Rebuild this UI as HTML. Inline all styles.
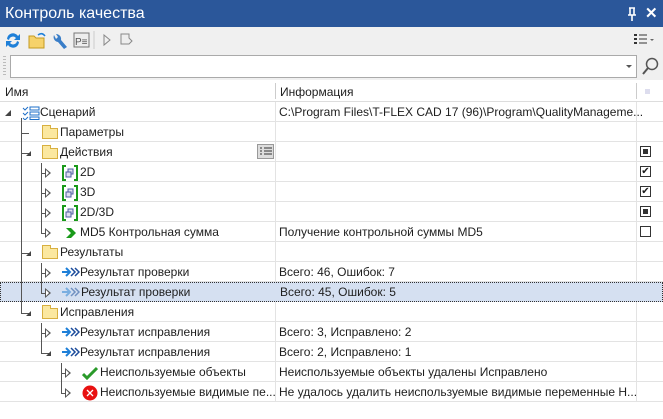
<!DOCTYPE html><html><head><meta charset="utf-8"><style>
*{margin:0;padding:0;box-sizing:border-box}
body{width:663px;height:419px;overflow:hidden;background:#fff;font-family:"Liberation Sans",sans-serif;font-size:12px;color:#1e1e1e;position:relative}
.a{position:absolute}
.title{left:0;top:0;width:663px;height:27px;background:#2b579a;color:#fff;font-size:16px;line-height:27px;padding-left:5px}
.tb{left:0;top:27px;width:663px;height:26px;background:#f0f0f0}
.sr{left:0;top:53px;width:663px;height:27px;background:#f0f0f0}
.hdr{left:0;top:80px;width:663px;height:22px;background:#fff;border-bottom:1px solid #ddd}
.row{position:absolute;left:0;width:663px;height:20px;border-bottom:1px solid #e3e3e3}
.t{position:absolute;top:1px;line-height:19px;white-space:nowrap}
.vl{position:absolute;width:1px;background:#555}
.hl{position:absolute;height:1px;background:#555}
.fold{position:absolute;width:16px;height:11px;background:#fbe8a0;border:1px solid #d8b040;top:6px}
.fold:before{content:"";position:absolute;left:-1px;top:-4px;width:7px;height:3px;background:#fbe8a0;border:1px solid #d8b040;border-bottom:none}
.tri2{position:absolute;width:0;height:0;border-top:5px solid transparent;border-bottom:5px solid transparent;border-left:6px solid #555}
.tri2:after{content:"";position:absolute;left:-5px;top:-3px;width:0;height:0;border-top:3px solid transparent;border-bottom:3px solid transparent;border-left:3.5px solid #fff}
.cb{position:absolute;left:640px;top:4px;width:11px;height:11px;border:1px solid #333;background:#fff}
</style></head><body>
<div class="a title">Контроль качества<svg class="a" style="left:626px;top:7px" width="12" height="14"><path d="M3 1h6M4 1v7M8 1v7M2 8h8M6 8v6" stroke="#fff" stroke-width="1.6" fill="none"/></svg><span style="position:absolute;left:645px;top:0;font-size:15px;font-weight:bold">✕</span></div>
<div class="a tb">
<svg class="a" style="left:4px;top:4px" width="130" height="18">
<path d="M3 8 A6 6 0 0 1 14 5 L16 3 L16 9 L10 9 L12 7 A4 4 0 0 0 5 9Z" fill="#1e7fd8"/><path d="M15 11 A6 6 0 0 1 4 14 L2 16 L2 10 L8 10 L6 12 A4 4 0 0 0 13 10Z" fill="#1e7fd8"/>
<path d="M25 5 h5 l2 2 h8 v10 h-15z" fill="#f6d26a" stroke="#c49a20"/><path d="M34 4 q4 -3 7 1" stroke="#1e7fd8" fill="none" stroke-width="1.5"/>
<path d="M50 4 a5 5 0 0 0 4 7 l6 7 l3 -2 l-6 -7 a5 5 0 0 0 -5 -6 l2 3 l-2 2z" fill="#3a7ec8"/>
<rect x="70" y="2" width="15" height="14" fill="#eee" stroke="#777"/><text x="71" y="14" font-size="10" fill="#555" font-family="Liberation Sans">P≡</text>
<path d="M90 0 v18" stroke="#ccc"/>
<path d="M100 4 l6 5 l-6 5z" fill="none" stroke="#888"/>
<path d="M117 3 h8 v4 l3 3 l-3 3 h-8z" fill="#eee" stroke="#888"/>
</svg>
<svg class="a" style="left:634px;top:6px" width="24" height="14"><rect x="0" y="1" width="3" height="2" fill="#333"/><rect x="0" y="5" width="3" height="2" fill="#333"/><rect x="0" y="9" width="3" height="2" fill="#333"/><path d="M5 2h8M5 6h8M5 10h8" stroke="#333"/><path d="M16 6l2 2 2-2z" fill="#666"/></svg>
</div>
<div class="a sr"><div class="a" style="left:3px;top:3px;width:3px;height:20px;background:repeating-linear-gradient(#bbb 0 1px,transparent 1px 3px)"></div>
<div class="a" style="left:10px;top:2px;width:627px;height:23px;background:#fff;border:1px solid #aaa"></div>
<div class="a" style="left:626px;top:12px;border-left:3px solid transparent;border-right:3px solid transparent;border-top:3px solid #555"></div>
<svg class="a" style="left:640px;top:3px" width="20" height="20"><circle cx="12" cy="8" r="5.5" fill="none" stroke="#555" stroke-width="1.5"/><path d="M8 12 L3 18" stroke="#555" stroke-width="2"/></svg></div>
<div class="a hdr"><span class="a" style="left:5px;top:5px">Имя</span><div class="a" style="left:275px;top:3px;width:1px;height:16px;background:#ccc"></div><span class="a" style="left:280px;top:5px">Информация</span><div class="a" style="left:636px;top:3px;width:1px;height:16px;background:#ccc"></div><div class="a" style="left:645px;top:9px;width:5px;height:5px;background:#dde"></div></div>
<div class="a" style="left:275px;top:102px;width:1px;height:300px;background:#e3e3e3"></div>
<div class="a" style="left:636px;top:102px;width:1px;height:300px;background:#e3e3e3"></div>

<div class="row" style="top:102px"><div class="a" style="left:5px;top:8px;border-left:6px solid transparent;border-bottom:6px solid #444"></div>
<svg class="a" style="left:22px;top:4px" width="18" height="14"><path d="M1 2l2 2 3-3M1 7l2 2 3-3M1 12l2 2 3-3" stroke="#1e6fc8" fill="none"/><rect x="8" y="1" width="9" height="3" fill="none" stroke="#1e6fc8"/><rect x="8" y="6" width="9" height="3" fill="none" stroke="#1e6fc8"/><rect x="8" y="11" width="9" height="2.5" fill="none" stroke="#1e6fc8"/></svg>
<span class="t" style="left:40px">Сценарий</span><span class="t" style="left:279px">C:\Program Files\T-FLEX CAD 17 (96)\Program\QualityManageme...</span></div>
<div class="row" style="top:122px"><div class="fold" style="left:42px"></div><span class="t" style="left:60px">Параметры</span></div>
<div class="row" style="top:142px"><div class="fold" style="left:42px"></div><span class="t" style="left:60px">Действия</span>
<div class="a" style="left:257px;top:2px;width:17px;height:15px;background:#ddd;border:1px solid #999"></div><svg class="a" style="left:259px;top:4px" width="14" height="11"><path d="M1 2h2M1 5h2M1 8h2M5 2h8M5 5h8M5 8h8" stroke="#333"/></svg><div class="cb"><div class="a" style="left:2px;top:2px;width:5px;height:5px;background:#333"></div></div></div>
<div class="row" style="top:162px"><span class="t" style="left:80px">2D</span><div class="cb" style="font-size:10px;line-height:9px;text-align:center">✔</div></div>
<div class="row" style="top:182px"><span class="t" style="left:80px">3D</span><div class="cb" style="font-size:10px;line-height:9px;text-align:center">✔</div></div>
<div class="row" style="top:202px"><span class="t" style="left:80px">2D/3D</span><div class="cb"><div class="a" style="left:2px;top:2px;width:5px;height:5px;background:#333"></div></div></div>
<div class="row" style="top:222px"><svg class="a" style="left:65px;top:5px" width="12" height="12"><path d="M1 1h5l5 5-5 5h-5l5-5z" fill="#1a9a1a"/></svg><span class="t" style="left:80px">MD5 Контрольная сумма</span><span class="t" style="left:279px">Получение контрольной суммы MD5</span><div class="cb"></div></div>
<div class="row" style="top:242px"><div class="fold" style="left:42px"></div><span class="t" style="left:60px">Результаты</span></div>
<div class="row" style="top:262px"><span class="t" style="left:80px">Результат проверки</span><span class="t" style="left:279px">Всего: 46, Ошибок: 7</span></div>
<div class="row" style="top:282px;background:#d5e0f1;border:1px dotted #333"><span class="t" style="left:80px;top:0">Результат проверки</span><span class="t" style="left:279px;top:0">Всего: 45, Ошибок: 5</span></div>
<div class="row" style="top:302px"><div class="fold" style="left:42px"></div><span class="t" style="left:60px">Исправления</span></div>
<div class="row" style="top:322px"><span class="t" style="left:80px">Результат исправления</span><span class="t" style="left:279px">Всего: 3, Исправлено: 2</span></div>
<div class="row" style="top:342px"><span class="t" style="left:80px">Результат исправления</span><span class="t" style="left:279px">Всего: 2, Исправлено: 1</span></div>
<div class="row" style="top:362px"><svg class="a" style="left:82px;top:4px" width="16" height="14"><path d="M1 8l4 4 10-10" stroke="#2a9a2a" stroke-width="3" fill="none"/></svg><span class="t" style="left:100px">Неиспользуемые объекты</span><span class="t" style="left:279px">Неиспользуемые объекты удалены Исправлено</span></div>
<div class="row" style="top:382px"><svg class="a" style="left:82px;top:3px" width="16" height="16"><circle cx="8" cy="8" r="7.5" fill="#e81010"/><path d="M5 5l6 6M11 5l-6 6" stroke="#fff" stroke-width="1.3"/></svg><span class="t" style="left:100px">Неиспользуемые видимые пе...</span><span class="t" style="left:279px">Не удалось удалить неиспользуемые видимые переменные Н...</span></div>

<div class="vl" style="left:21px;top:118px;height:195px"></div>
<div class="hl" style="left:21px;top:133px;width:8px"></div>
<div class="hl" style="left:21px;top:153px;width:8px"></div><div class="a" style="left:26px;top:151px;border-left:5px solid transparent;border-bottom:5px solid #444"></div>
<div class="hl" style="left:21px;top:253px;width:8px"></div><div class="a" style="left:26px;top:251px;border-left:5px solid transparent;border-bottom:5px solid #444"></div>
<div class="hl" style="left:21px;top:313px;width:8px"></div><div class="a" style="left:26px;top:311px;border-left:5px solid transparent;border-bottom:5px solid #444"></div>
<div class="vl" style="left:41px;top:163px;height:70px"></div>
<div class="vl" style="left:41px;top:263px;height:30px"></div>
<div class="vl" style="left:41px;top:323px;height:30px"></div>
<div class="vl" style="left:61px;top:363px;height:30px"></div>
<div class="hl" style="left:41px;top:173px;width:4px"></div><div class="tri2" style="left:45px;top:168px"></div>
<div class="hl" style="left:41px;top:193px;width:4px"></div><div class="tri2" style="left:45px;top:188px"></div>
<div class="hl" style="left:41px;top:213px;width:4px"></div><div class="tri2" style="left:45px;top:208px"></div>
<div class="hl" style="left:41px;top:233px;width:4px"></div><div class="tri2" style="left:45px;top:228px"></div>
<div class="hl" style="left:41px;top:273px;width:4px"></div><div class="tri2" style="left:45px;top:268px"></div>
<div class="hl" style="left:41px;top:293px;width:4px"></div><div class="tri2" style="left:45px;top:288px"></div>
<div class="hl" style="left:41px;top:333px;width:4px"></div><div class="tri2" style="left:45px;top:328px"></div>
<div class="hl" style="left:41px;top:353px;width:8px"></div><div class="a" style="left:46px;top:351px;border-left:5px solid transparent;border-bottom:5px solid #444"></div>
<div class="hl" style="left:61px;top:373px;width:4px"></div><div class="tri2" style="left:65px;top:368px"></div>
<div class="hl" style="left:61px;top:393px;width:4px"></div><div class="tri2" style="left:65px;top:388px"></div>
<svg class="a" style="left:62px;top:165px" width="16" height="16"><path d="M4 1H1V15H4M12 1H15V15H12" stroke="#1a9a1a" stroke-width="2" fill="none"/><rect x="6" y="4" width="5" height="5" fill="#dde" stroke="#5060a0"/><rect x="4" y="7" width="5" height="5" fill="#dde" stroke="#5060a0"/></svg>
<svg class="a" style="left:62px;top:185px" width="16" height="16"><path d="M4 1H1V15H4M12 1H15V15H12" stroke="#1a9a1a" stroke-width="2" fill="none"/><rect x="6" y="4" width="5" height="5" fill="#dde" stroke="#5060a0"/><rect x="4" y="7" width="5" height="5" fill="#dde" stroke="#5060a0"/></svg>
<svg class="a" style="left:62px;top:205px" width="16" height="16"><path d="M4 1H1V15H4M12 1H15V15H12" stroke="#1a9a1a" stroke-width="2" fill="none"/><rect x="6" y="4" width="5" height="5" fill="#dde" stroke="#5060a0"/><rect x="4" y="7" width="5" height="5" fill="#dde" stroke="#5060a0"/></svg>
<svg class="a" style="left:62px;top:267px" width="18" height="10"><path d="M0 5h7M4 1l4 4-4 4" stroke="#1e7fd8" stroke-width="2" fill="none"/><path d="M9 1l4 4-4 4M13 1l4 4-4 4" stroke="#1a4a9a" stroke-width="1.5" fill="none"/></svg>
<svg class="a" style="left:62px;top:287px" width="18" height="10"><path d="M0 5h7M4 1l4 4-4 4" stroke="#7aaee0" stroke-width="2" fill="none"/><path d="M9 1l4 4-4 4M13 1l4 4-4 4" stroke="#7090c0" stroke-width="1.5" fill="none"/></svg>
<svg class="a" style="left:62px;top:327px" width="18" height="10"><path d="M0 5h7M4 1l4 4-4 4" stroke="#1e7fd8" stroke-width="2" fill="none"/><path d="M9 1l4 4-4 4M13 1l4 4-4 4" stroke="#1a4a9a" stroke-width="1.5" fill="none"/></svg>
<svg class="a" style="left:62px;top:347px" width="18" height="10"><path d="M0 5h7M4 1l4 4-4 4" stroke="#1e7fd8" stroke-width="2" fill="none"/><path d="M9 1l4 4-4 4M13 1l4 4-4 4" stroke="#1a4a9a" stroke-width="1.5" fill="none"/></svg>
</body></html>
